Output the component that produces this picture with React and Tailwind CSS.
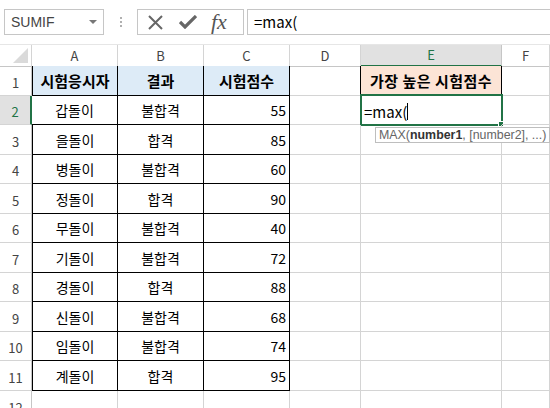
import React from "react";

const rows = [
  ["갑돌이", "불합격", 55],
  ["을돌이", "합격", 85],
  ["병돌이", "불합격", 60],
  ["정돌이", "합격", 90],
  ["무돌이", "불합격", 40],
  ["기돌이", "불합격", 72],
  ["경돌이", "합격", 88],
  ["신돌이", "불합격", 68],
  ["임돌이", "불합격", 74],
  ["계돌이", "합격", 95],
];

const heights = [30, 29, 30, 29, 30, 29, 30, 29, 30, 29, 30, 30];

const gridCols = "grid grid-cols-[32px_86px_86px_86px_71px_141px_1fr]";
const kr = { fontFamily: '"Noto Sans CJK KR", "Noto Sans", sans-serif' };
const latin = { fontFamily: '"Liberation Sans", Arial, sans-serif' };

function RowHead({ n, selected }) {
  return (
    <div
      className={
        "flex items-end justify-center pb-[3px] text-[13px] border-b border-[#d4d4d4] " +
        (selected
          ? "bg-[#e1e1e1] text-[#217346] border-r-2 border-r-[#217346]"
          : "bg-white text-[#444] border-r border-r-[#c6c6c6]")
      }
    >
      {n}
    </div>
  );
}

function Cell({ children, className = "" }) {
  return (
    <div className={"relative flex items-end pb-[3px] px-[3px] border-r border-b " + className}>
      {children}
    </div>
  );
}

function ColHead({ label, selected }) {
  return (
    <div
      className={
        "flex items-center justify-center text-[13px] " +
        (selected
          ? "bg-[#e1e1e1] text-[#217346] border-r border-r-[#c6c6c6] border-b-2 border-b-[#217346]"
          : "bg-white text-[#444] border-r border-r-[#d4d4d4] border-b border-b-[#c6c6c6]")
      }
    >
      {label}
    </div>
  );
}

export default function App() {
  return (
    <div className="w-[550px] h-[408px] overflow-hidden bg-white text-black" style={kr}>
      {/* formula bar */}
      <div className="h-[44px] flex items-start pt-[9px] pl-[4px] gap-[3px]">
        <div
          className="w-[100px] h-[26px] border border-[#c6c6c6] flex items-center justify-between pl-[6px] pr-[6px] text-[14px] text-[#444]"
          style={latin}
        >
          <span>SUMIF</span>
          <svg width="8" height="5" viewBox="0 0 8 5">
            <path d="M0 0 L8 0 L4 4 Z" fill="#777" />
          </svg>
        </div>
        <div className="w-[27px] h-[26px] flex flex-col items-center justify-center gap-[2px]">
          <span className="w-[2px] h-[2px] bg-[#b0b0b0]" />
          <span className="w-[2px] h-[2px] bg-[#b0b0b0]" />
          <span className="w-[2px] h-[2px] bg-[#b0b0b0]" />
        </div>
        <div className="w-[107px] h-[26px] border border-[#c6c6c6] flex items-center pl-[10px] gap-[16px]">
          <svg width="15" height="15" viewBox="0 0 15 15">
            <path d="M1 1 L14 14 M14 1 L1 14" stroke="#666" strokeWidth="2" />
          </svg>
          <svg width="18" height="14" viewBox="0 0 18 14">
            <path d="M1 7 L6 12 L17 1" stroke="#666" strokeWidth="3.2" fill="none" />
          </svg>
          <span
            className="text-[22px] italic text-[#555] leading-none -ml-[2px]"
            style={{ fontFamily: '"Liberation Serif", serif' }}
          >
            fx
          </span>
        </div>
        <div className="flex-1 h-[26px] border border-r-0 border-[#c6c6c6] flex items-center pl-[6px] text-[15px]">
          =max(
        </div>
      </div>

      {/* column headers */}
      <div className={gridCols + " h-[22px] border-t border-[#e6e6e6]"}>
        <div className="relative bg-white border-r border-r-[#d4d4d4] border-b border-b-[#c6c6c6]">
          <svg className="absolute right-[3px] bottom-[3px]" width="15" height="15" viewBox="0 0 15 15">
            <path d="M15 0 L15 15 L0 15 Z" fill="#dadada" />
          </svg>
        </div>
        <ColHead label="A" />
        <ColHead label="B" />
        <ColHead label="C" />
        <ColHead label="D" />
        <ColHead label="E" selected />
        <ColHead label="F" />
      </div>

      {/* row 1 */}
      <div className={gridCols} style={{ height: heights[0] }}>
        <RowHead n={1} />
        <Cell className="justify-center font-bold text-[15px] bg-[#ddebf7] border-l border-black">시험응시자</Cell>
        <Cell className="justify-center font-bold text-[15px] bg-[#ddebf7] border-black">결과</Cell>
        <Cell className="justify-center font-bold text-[15px] bg-[#ddebf7] border-black">시험점수</Cell>
        <Cell className="border-r-black border-b-[#d4d4d4]" />
        <Cell className="justify-center font-bold text-[15px] bg-[#fce4d6] border-black tracking-[0.5px]">
          가장 높은 시험점수
        </Cell>
        <Cell className="border-[#d4d4d4]" />
      </div>

      {/* data rows */}
      {rows.map(([name, result, score], i) => (
        <div key={i} className={gridCols} style={{ height: heights[i + 1] }}>
          <RowHead n={i + 2} selected={i === 0} />
          <Cell className={"justify-center text-[14px] border-black " + (i === 0 ? "" : "border-l")}>{name}</Cell>
          <Cell className="justify-center text-[14px] border-black">{result}</Cell>
          <Cell className="justify-end text-[14px] border-black">{score}</Cell>
          <Cell className="border-[#d4d4d4]" />
          <Cell className="border-[#d4d4d4]">
            {i === 0 && (
              <>
                <span className="text-[15px] leading-none mb-[2px]">=max(</span>
                <span className="w-px h-[17px] bg-black mb-[1px]" />
                <div className="absolute -left-[1px] -top-[2px] w-[143px] h-[32px] border-2 border-[#217346]" />
                <div className="absolute right-[-3px] bottom-[-3px] w-[6px] h-[6px] bg-[#217346] border border-white" />
                <div
                  className="absolute left-[14px] top-[31px] z-10 h-[16px] flex items-center px-[3px] bg-white border border-[#bebebe] text-[12.4px] text-[#666] whitespace-nowrap"
                  style={latin}
                >
                  MAX(<b className="text-[#333]">number1</b>, [number2], ...)
                </div>
              </>
            )}
          </Cell>
          <Cell className="border-[#d4d4d4]" />
        </div>
      ))}

      {/* row 12 */}
      <div className={gridCols} style={{ height: heights[11] }}>
        <RowHead n={12} />
        <Cell className="border-[#d4d4d4]" />
        <Cell className="border-[#d4d4d4]" />
        <Cell className="border-[#d4d4d4]" />
        <Cell className="border-[#d4d4d4]" />
        <Cell className="border-[#d4d4d4]" />
        <Cell className="border-[#d4d4d4]" />
      </div>
    </div>
  );
}
